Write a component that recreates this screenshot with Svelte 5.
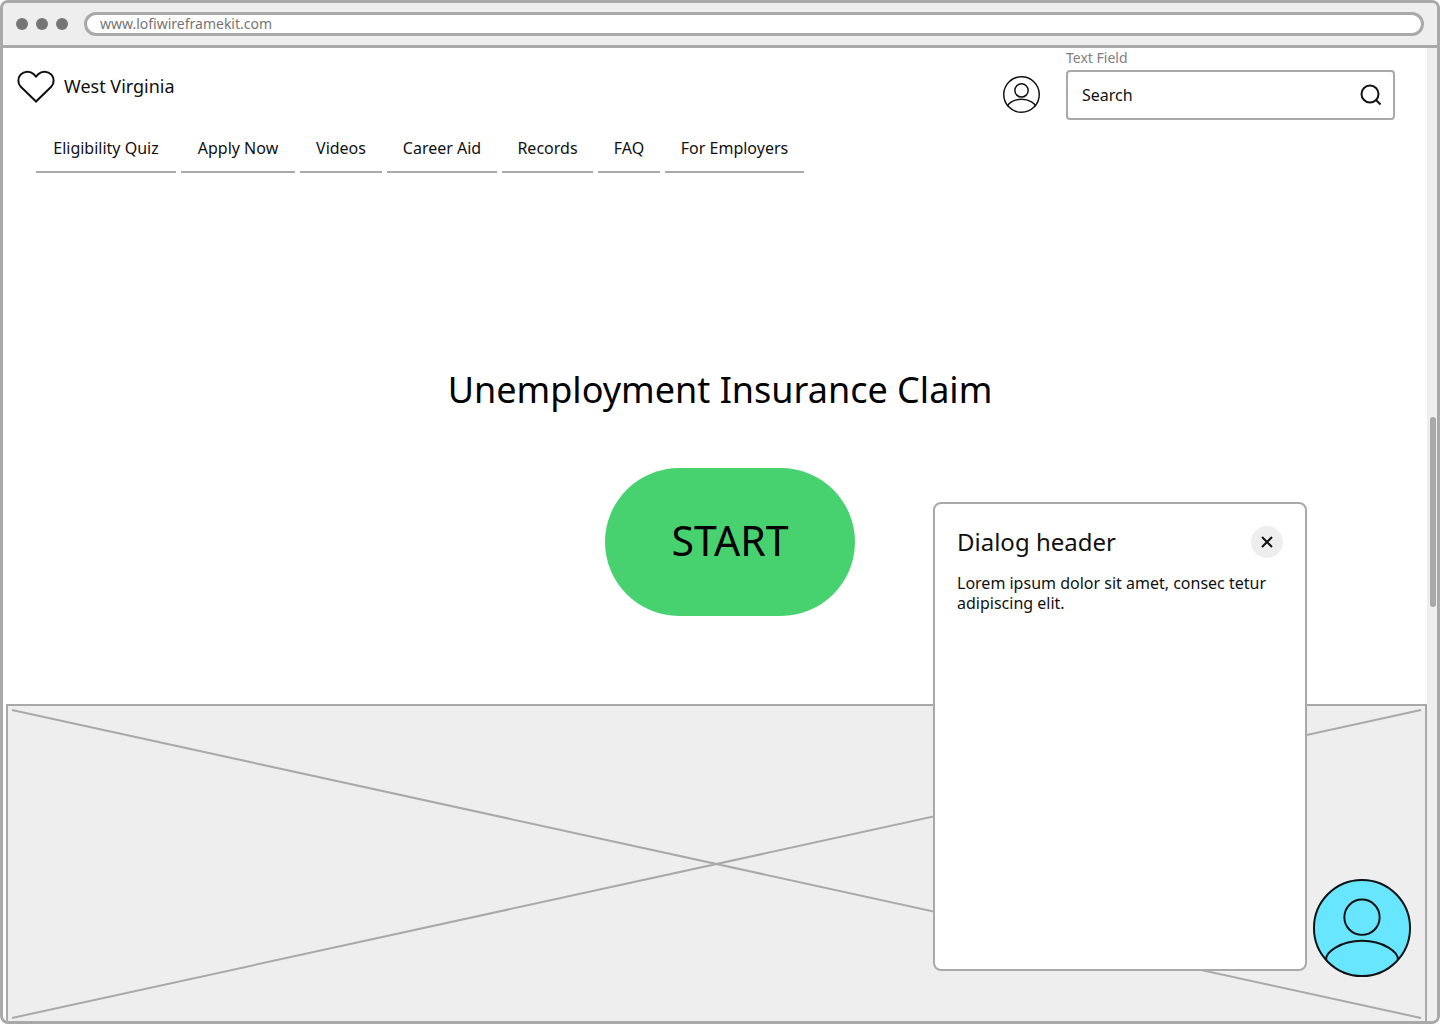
<script>
  const tabs = ['Eligibility Quiz', 'Apply Now', 'Videos', 'Career Aid', 'Records', 'FAQ', 'For Employers'];
  let open = $state(true);
</script>

{#snippet person(stroke)}
  <circle cx="50" cy="50" r={50 - stroke / 2} />
  <circle cx="50" cy="39" r="18" />
  <path d="M13.500 82.500C12 75 28 63 50 63s38 12 36.500 19.500" />
{/snippet}

<div class="window">
  <div class="chrome">
    <div class="dots"><i></i><i></i><i></i></div>
    <input class="url" type="text" aria-label="Address" value="www.lofiwireframekit.com" />
  </div>

  <div class="viewport">
    <main>
      <header>
        <a class="brand" href="#home">
          <svg class="heart" viewBox="0 0 38 33" aria-hidden="true">
            <path d="M19 31.500 3.800 16.800C.6 13.500.6 7.800 3.600 4.600 7 1 13.200.6 16.500 4L19 6.600 21.500 4C24.800.6 31 1 34.400 4.600c3 3.200 3 8.900-.2 12.200Z" />
          </svg>
          <span>West Virginia</span>
        </a>
        <button class="account" aria-label="Account">
          <svg viewBox="0 0 100 100" aria-hidden="true">{@render person(4)}</svg>
        </button>
        <div class="field">
          <label for="search">Text Field</label>
          <div class="box">
            <input id="search" type="text" placeholder="Search" />
            <button class="find" aria-label="Search">
              <svg viewBox="0 0 24 24" aria-hidden="true"><circle cx="11" cy="11" r="8.500" /><path d="m17 17 4.500 4.500" /></svg>
            </button>
          </div>
        </div>
      </header>

      <nav>
        {#each tabs as tab}
          <a href="#{tab.toLowerCase().replace(' ', '-')}">{tab}</a>
        {/each}
      </nav>

      <section class="hero">
        <h1>Unemployment Insurance Claim</h1>
        <button class="start">START</button>
      </section>

      <div class="picture">
        <svg viewBox="0 0 100 100" preserveAspectRatio="none" aria-hidden="true">
          <path d="M0 0 100 100M0 100 100 0" />
        </svg>
      </div>
    </main>

    <div class="track"><div class="thumb"></div></div>

    {#if open}
      <div class="dialog" role="dialog" aria-labelledby="dialog-title">
        <div class="dialog-head">
          <h2 id="dialog-title">Dialog header</h2>
          <button class="close" aria-label="Close" onclick={() => (open = false)}>
            <svg viewBox="0 0 12 12" aria-hidden="true"><path d="m1 1 10 10M11 1 1 11" /></svg>
          </button>
        </div>
        <p>Lorem ipsum dolor sit amet, consec tetur adipiscing elit.</p>
      </div>
    {/if}
    <button class="chat" aria-label="Chat" onclick={() => (open = !open)}>
      <svg viewBox="0 0 100 100" aria-hidden="true">{@render person(2)}</svg>
    </button>
  </div>
</div>

<style>
  :global(body) {
    background: #fff;
  }

  .window, .window * {
    box-sizing: border-box;
  }

  .window {
    display: flex;
    flex-direction: column;
    min-height: 100vh;
    overflow: hidden;
    border: 3px solid #a9a9a9;
    border-radius: 8px;
    background: #fff;
    color: #111;
    font: 16px/20px "Noto Sans", sans-serif;
  }

  button, input {
    padding: 0;
    border: 0;
    background: none;
    color: inherit;
    font: inherit;
    outline: 0;
  }

  a {
    color: inherit;
    text-decoration: none;
  }

  h1, h2, p {
    margin: 0;
    font-weight: 400;
  }

  svg {
    display: block;
    width: 100%;
    fill: none;
    stroke: #111;
  }

  .chrome {
    display: flex;
    align-items: center;
    gap: 16px;
    height: 45px;
    padding: 0 13px;
    border-bottom: 3px solid #a9a9a9;
    background: #eee;
  }

  .dots {
    display: flex;
    gap: 8px;
  }

  .dots i {
    width: 12px;
    height: 12px;
    border-radius: 50%;
    background: #757575;
  }

  .url {
    flex: 1;
    height: 24px;
    padding: 0 13px 2px;
    border: 3px solid #a9a9a9;
    border-radius: 12px;
    background: #fff;
    color: #757575;
    font-size: 14px;
  }

  .viewport {
    position: relative;
    display: flex;
    flex: 1;
  }

  main {
    display: flex;
    flex: 1;
    flex-direction: column;
  }

  header {
    display: flex;
    padding: 0 32px 0 14px;
  }

  .brand {
    display: flex;
    align-items: center;
    gap: 9px;
    height: 76px;
    margin-right: auto;
    font-size: 18px;
  }

  .heart {
    width: 38px;
    stroke-width: 2;
  }

  .account {
    width: 37px;
    height: 37px;
    margin: 28px 26px 0 0;
    stroke-width: 4;
  }

  .field {
    width: 329px;
  }

  .field label {
    display: block;
    height: 22px;
    color: #808080;
    font-size: 14px;
  }

  .box {
    display: flex;
    align-items: center;
    height: 50px;
    padding: 0 10px 0 14px;
    border: 2px solid #a9a9a9;
    border-radius: 4px;
  }

  .box input {
    flex: 1;
    min-width: 0;
  }

  .box input::placeholder {
    color: #111;
    opacity: 1;
  }

  .find {
    width: 24px;
    stroke-width: 2;
  }

  nav {
    display: grid;
    grid-template-columns: 140px 114px 82px 110px 91px 62px 139px;
    gap: 5px;
    padding: 0 33px;
  }

  nav a {
    height: 49px;
    padding-top: 14px;
    border-bottom: 2px solid #a9a9a9;
    text-align: center;
    white-space: nowrap;
  }

  .hero {
    display: flex;
    flex-direction: column;
    align-items: center;
    gap: 54px;
    padding: 193px 0 88px 10px;
    color: #000;
  }

  h1 {
    font-size: 36px;
    line-height: 48px;
  }

  .start {
    width: 250px;
    height: 148px;
    margin-left: 20px;
    padding-bottom: 4px;
    border-radius: 74px;
    background: #48d26f;
    font-size: 41px;
  }

  .picture {
    display: flex;
    flex: 1;
    min-height: 317px;
    margin-left: 3px;
    padding: 4px 4px 3px;
    border: 2px solid #a9a9a9;
    border-bottom: 0;
    background: #eee;
  }

  .picture svg {
    height: 308px;
    flex: 1;
    overflow: visible;
  }

  .picture path {
    stroke: #a9a9a9;
    stroke-width: 2;
    vector-effect: non-scaling-stroke;
  }

  .track {
    display: flex;
    align-items: center;
    justify-content: center;
    width: 10px;
    padding-left: 2px;
    padding-bottom: 46px;
    background: #eee;
  }

  .thumb {
    width: 6px;
    height: 190px;
    border-radius: 3px;
    background: #a9a9a9;
  }

  .dialog {
    position: absolute;
    right: 130px;
    bottom: 50px;
    width: 374px;
    height: 469px;
    padding: 22px;
    border: 2px solid #a9a9a9;
    border-radius: 8px;
    background: #fff;
  }

  .dialog-head {
    display: flex;
    align-items: center;
    justify-content: space-between;
    height: 32px;
    margin-bottom: 15px;
  }

  h2 {
    font-size: 24px;
    line-height: 32px;
  }

  .close {
    display: grid;
    place-items: center;
    width: 32px;
    height: 32px;
    border-radius: 50%;
    background: #eee;
  }

  .close svg {
    width: 12px;
    stroke-width: 2;
  }

  .chat {
    position: absolute;
    right: 26px;
    bottom: 44px;
    width: 98px;
    height: 98px;
    border-radius: 50%;
    background: #68e5ff;
    stroke-width: 2;
  }
</style>
